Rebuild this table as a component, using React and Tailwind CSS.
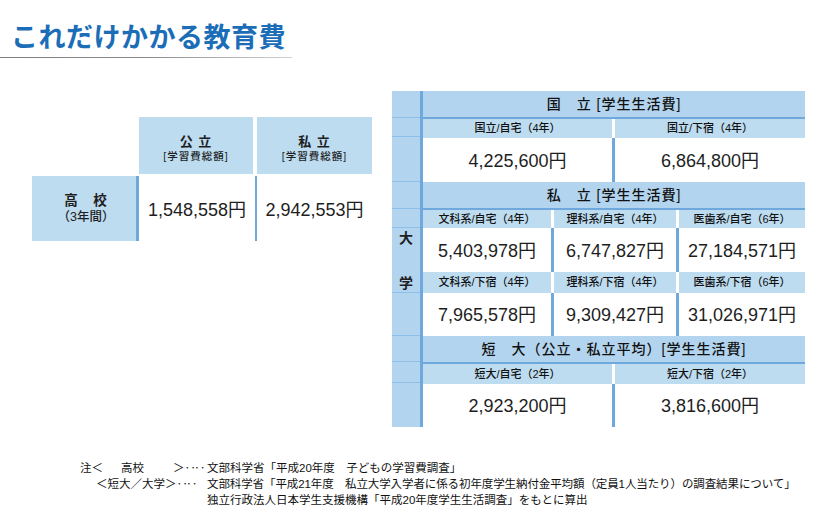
const HEAD = 'bg-[#b3d4ee]';
const SUB = 'bg-[#bddcf0]';

function SectionHeader({ children }) {
  return (
    <div className={`flex h-[28px] items-center justify-center border-b-2 border-[#6fa8dc] ${HEAD} text-[14px] font-medium tracking-[1px] text-[#111]`}>
      {children}
    </div>
  );
}

function SubRow({ labels, cols, h }) {
  return (
    <div className={`grid ${cols} ${h} bg-white`}>
      {labels.map((l, i) => (
        <div
          key={l}
          className={`flex items-center justify-center ${SUB} text-[11px] font-medium text-[#111] ${i > 0 ? 'border-l-[3px] border-white' : ''}`}
        >
          {l}
        </div>
      ))}
    </div>
  );
}

function ValueRow({ values, cols, h }) {
  return (
    <div className={`grid ${cols} ${h} bg-white`}>
      {values.map((v, i) => (
        <div
          key={v}
          className={`flex items-center justify-center pt-[2px] text-[18px] ${i > 0 ? 'border-l-[3px] border-[#6fa8dc]' : ''}`}
        >
          {v}
        </div>
      ))}
    </div>
  );
}

function HighSchoolTable() {
  return (
    <div className="ml-[32px] mt-[26px] w-[340px]">
      <div className="flex h-[57px]">
        <div className="w-[107px]" />
        <div className={`flex w-[114px] flex-col items-center justify-center pt-[6px] ${SUB}`}>
          <span className="text-[13px] font-bold leading-[16px] tracking-[1px]">公 立</span>
          <span className="text-[10.5px] font-medium leading-[13px] tracking-[1px]">[学習費総額]</span>
        </div>
        <div className={`ml-[4px] flex w-[115px] flex-col items-center justify-center pt-[6px] ${SUB}`}>
          <span className="text-[13px] font-bold leading-[16px] tracking-[1px]">私 立</span>
          <span className="text-[10.5px] font-medium leading-[13px] tracking-[1px]">[学習費総額]</span>
        </div>
      </div>
      <div className="mt-[2px] flex h-[65px]">
        <div className={`flex w-[104px] flex-col items-center justify-center pl-[4px] ${SUB}`}>
          <span className="text-[13.5px] font-bold leading-[17px] tracking-[1px]">高　校</span>
          <span className="text-[12.5px] font-medium leading-[17px]">（3年間）</span>
        </div>
        <div className="flex w-[119px] items-center justify-center border-l-[3px] border-[#6fa8dc] pt-[3px] text-[18px]">
          1,548,558円
        </div>
        <div className="flex w-[117px] items-center justify-center border-l-2 border-[#6fa8dc] pt-[3px] text-[18px]">
          2,942,553円
        </div>
      </div>
    </div>
  );
}

function UniversityTable() {
  const two = 'grid-cols-[189px_1fr]';
  const three = 'grid-cols-[128px_125px_1fr]';
  return (
    <div className="ml-[20px] flex w-[413px]">
      {/* 左の「大学」列 */}
      <div className={`flex w-[31px] flex-col border-r-[3px] border-[#6fa8dc] ${HEAD} text-[14px] font-bold`}>
        <div className="h-[27px] border-b border-[#8dbfe8]" />
        <div className="h-[19px] border-b border-[#8dbfe8]" />
        <div className="h-[45px] border-b border-[#8dbfe8]" />
        <div className="h-[27px] border-b border-[#8dbfe8]" />
        <div className="h-[19px] border-b border-[#8dbfe8]" />
        <div className="flex h-[65px] flex-col items-center justify-between border-b border-[#8dbfe8] pt-[1px] leading-[18px]">
          <span>大</span>
          <span>学</span>
        </div>
        <div className="h-[43px] border-b border-[#8dbfe8]" />
        <div className="h-[26px] border-b border-[#8dbfe8]" />
        <div className="h-[21px] border-b border-[#8dbfe8]" />
        <div className="h-[44px]" />
      </div>

      <div className="flex flex-1 flex-col">
        <SectionHeader>国　立 [学生生活費]</SectionHeader>
        <SubRow cols={two} h="h-[19px]" labels={['国立/自宅（4年）', '国立/下宿（4年）']} />
        <ValueRow cols={two} h="h-[44px]" values={['4,225,600円', '6,864,800円']} />

        <SectionHeader>私　立 [学生生活費]</SectionHeader>
        <SubRow cols={three} h="h-[18px]" labels={['文科系/自宅（4年）', '理科系/自宅（4年）', '医歯系/自宅（6年）']} />
        <ValueRow cols={three} h="h-[44px]" values={['5,403,978円', '6,747,827円', '27,184,571円']} />
        <SubRow cols={three} h="h-[21px]" labels={['文科系/下宿（4年）', '理科系/下宿（4年）', '医歯系/下宿（6年）']} />
        <ValueRow cols={three} h="h-[43px]" values={['7,965,578円', '9,309,427円', '31,026,971円']} />

        <SectionHeader>短　大（公立・私立平均）[学生生活費]</SectionHeader>
        <SubRow cols={two} h="h-[20px]" labels={['短大/自宅（2年）', '短大/下宿（2年）']} />
        <ValueRow cols={two} h="h-[43px]" values={['2,923,200円', '3,816,600円']} />
      </div>
    </div>
  );
}

function Notes() {
  return (
    <div className="mt-[33px] text-[11.5px] leading-[16px] text-[#111]">
      <div className="flex">
        <span className="flex w-[207px] shrink-0 whitespace-nowrap pl-[80px]">
          <span>注＜</span>
          <span className="ml-[18px]">高校</span>
          <span className="ml-[29px]">＞</span>
          <span className="tracking-[-2px]">‥‥</span>
        </span>
        <span>文部科学省「平成20年度　子どもの学習費調査」</span>
      </div>
      <div className="flex">
        <span className="w-[207px] shrink-0 whitespace-nowrap pl-[96px]">
          ＜短大／大学＞<span className="tracking-[-2px]">‥‥</span>
        </span>
        <span className="whitespace-nowrap tracking-[-0.1px]">
          文部科学省「平成21年度　私立大学入学者に係る初年度学生納付金平均額（定員1人当たり）の調査結果について」
        </span>
      </div>
      <div className="pl-[207px]">独立行政法人日本学生支援機構「平成20年度学生生活調査」をもとに算出</div>
    </div>
  );
}

export default function App() {
  return (
    <div className="h-[514px] w-[824px] overflow-hidden bg-white font-['Liberation_Sans','Noto_Sans_CJK_JP',sans-serif] text-[#1e1e1e]">
      <div className="pt-[19px]">
        <h1 className="pl-[11px] font-['Noto_Sans_CJK_JP',sans-serif] text-[27px] font-bold leading-[34px] tracking-[0.5px] text-[#1b6db8]">
          これだけかかる教育費
        </h1>
        <div className="mt-[4px] h-px w-[292px] bg-gradient-to-r from-[#7f7f7f] via-[#8a8a8a] to-[#d0d0d0]" />
      </div>

      <div className="mt-[33px] flex items-start">
        <HighSchoolTable />
        <UniversityTable />
      </div>

      <Notes />
    </div>
  );
}
